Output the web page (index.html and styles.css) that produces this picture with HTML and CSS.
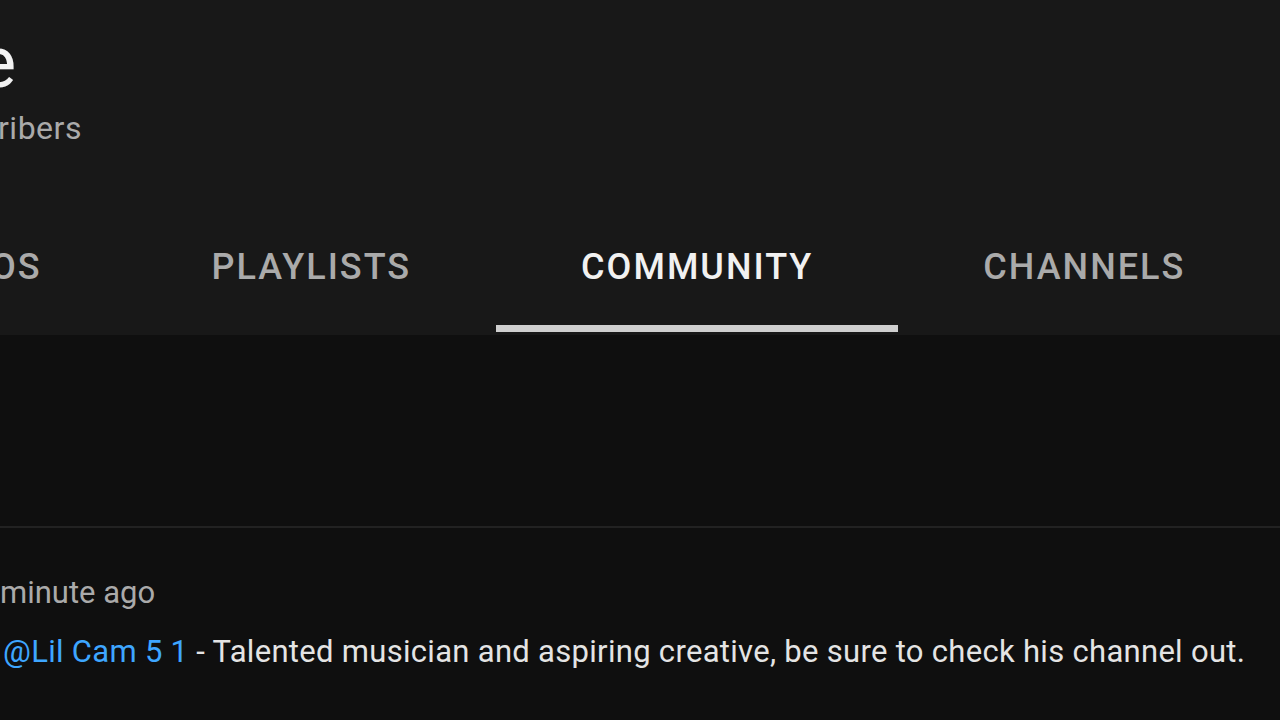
FILE: index.html
```html
<!DOCTYPE html>
<html lang="en">
<head>
<meta charset="utf-8">
<title>Community</title>
<link rel="stylesheet" href="styles.css">
</head>
<body>
<header class="channel-header">
  <div class="channel-info">
    <div class="channel-name">e</div>
    <div class="channel-subs">ribers</div>
  </div>
  <nav class="tabs">
    <div class="tab tab-first">OS</div>
    <div class="tab">PLAYLISTS</div>
    <div class="tab tab-active">COMMUNITY</div>
    <div class="tab">CHANNELS</div>
  </nav>
</header>
<main class="feed">
  <div class="feed-top"></div>
  <article class="post">
    <div class="post-time">minute ago</div>
    <p class="post-text"><a class="mention" href="#">@Lil Cam 5 1</a> - Talented musician and aspiring creative, be sure to check his channel out.</p>
  </article>
</main>
</body>
</html>
```

FILE: styles.css
```css
html, body {
  margin: 0;
  padding: 0;
  height: 100%;
  overflow: hidden;
  background: #0f0f0f;
  font-family: Roboto, "Liberation Sans", sans-serif;
}

.channel-header {
  background: #181818;
  padding-top: 23px;
  padding-bottom: 3px;
}

.channel-info {
  display: flex;
  flex-direction: column;
  gap: 7px;
}

.channel-name {
  font-size: 72px;
  line-height: 80px;
  color: #f1f1f1;
  font-weight: 400;
  margin-left: -22px;
}

.channel-subs {
  font-size: 32px;
  line-height: 36px;
  letter-spacing: 0.5px;
  color: #aaaaaa;
  margin-left: -2px;
}

.tabs {
  display: flex;
  margin-top: 101px;
  margin-left: -94px;
}

.tab {
  font-size: 36px;
  line-height: 40px;
  font-weight: 500;
  letter-spacing: 2px;
  color: #aaaaaa;
  padding: 0 85px 38px;
  border-bottom: 7px solid transparent;
  white-space: nowrap;
}

.tab-active {
  color: #f1f1f1;
  border-bottom-color: #cfcfcf;
}

.feed {
  background: #0f0f0f;
}

.feed-top {
  height: 191px;
  border-bottom: 2px solid #222222;
}

.post {
  padding-top: 45px;
}

.post-time {
  font-size: 31px;
  line-height: 40px;
  color: #aaaaaa;
}

.post-text {
  margin: 19px 0 0;
  padding-left: 3px;
  font-size: 31px;
  line-height: 40px;
  letter-spacing: 0.3px;
  color: #e4e4e4;
  white-space: nowrap;
}

.mention {
  color: #3ea6ff;
  text-decoration: none;
}
```
